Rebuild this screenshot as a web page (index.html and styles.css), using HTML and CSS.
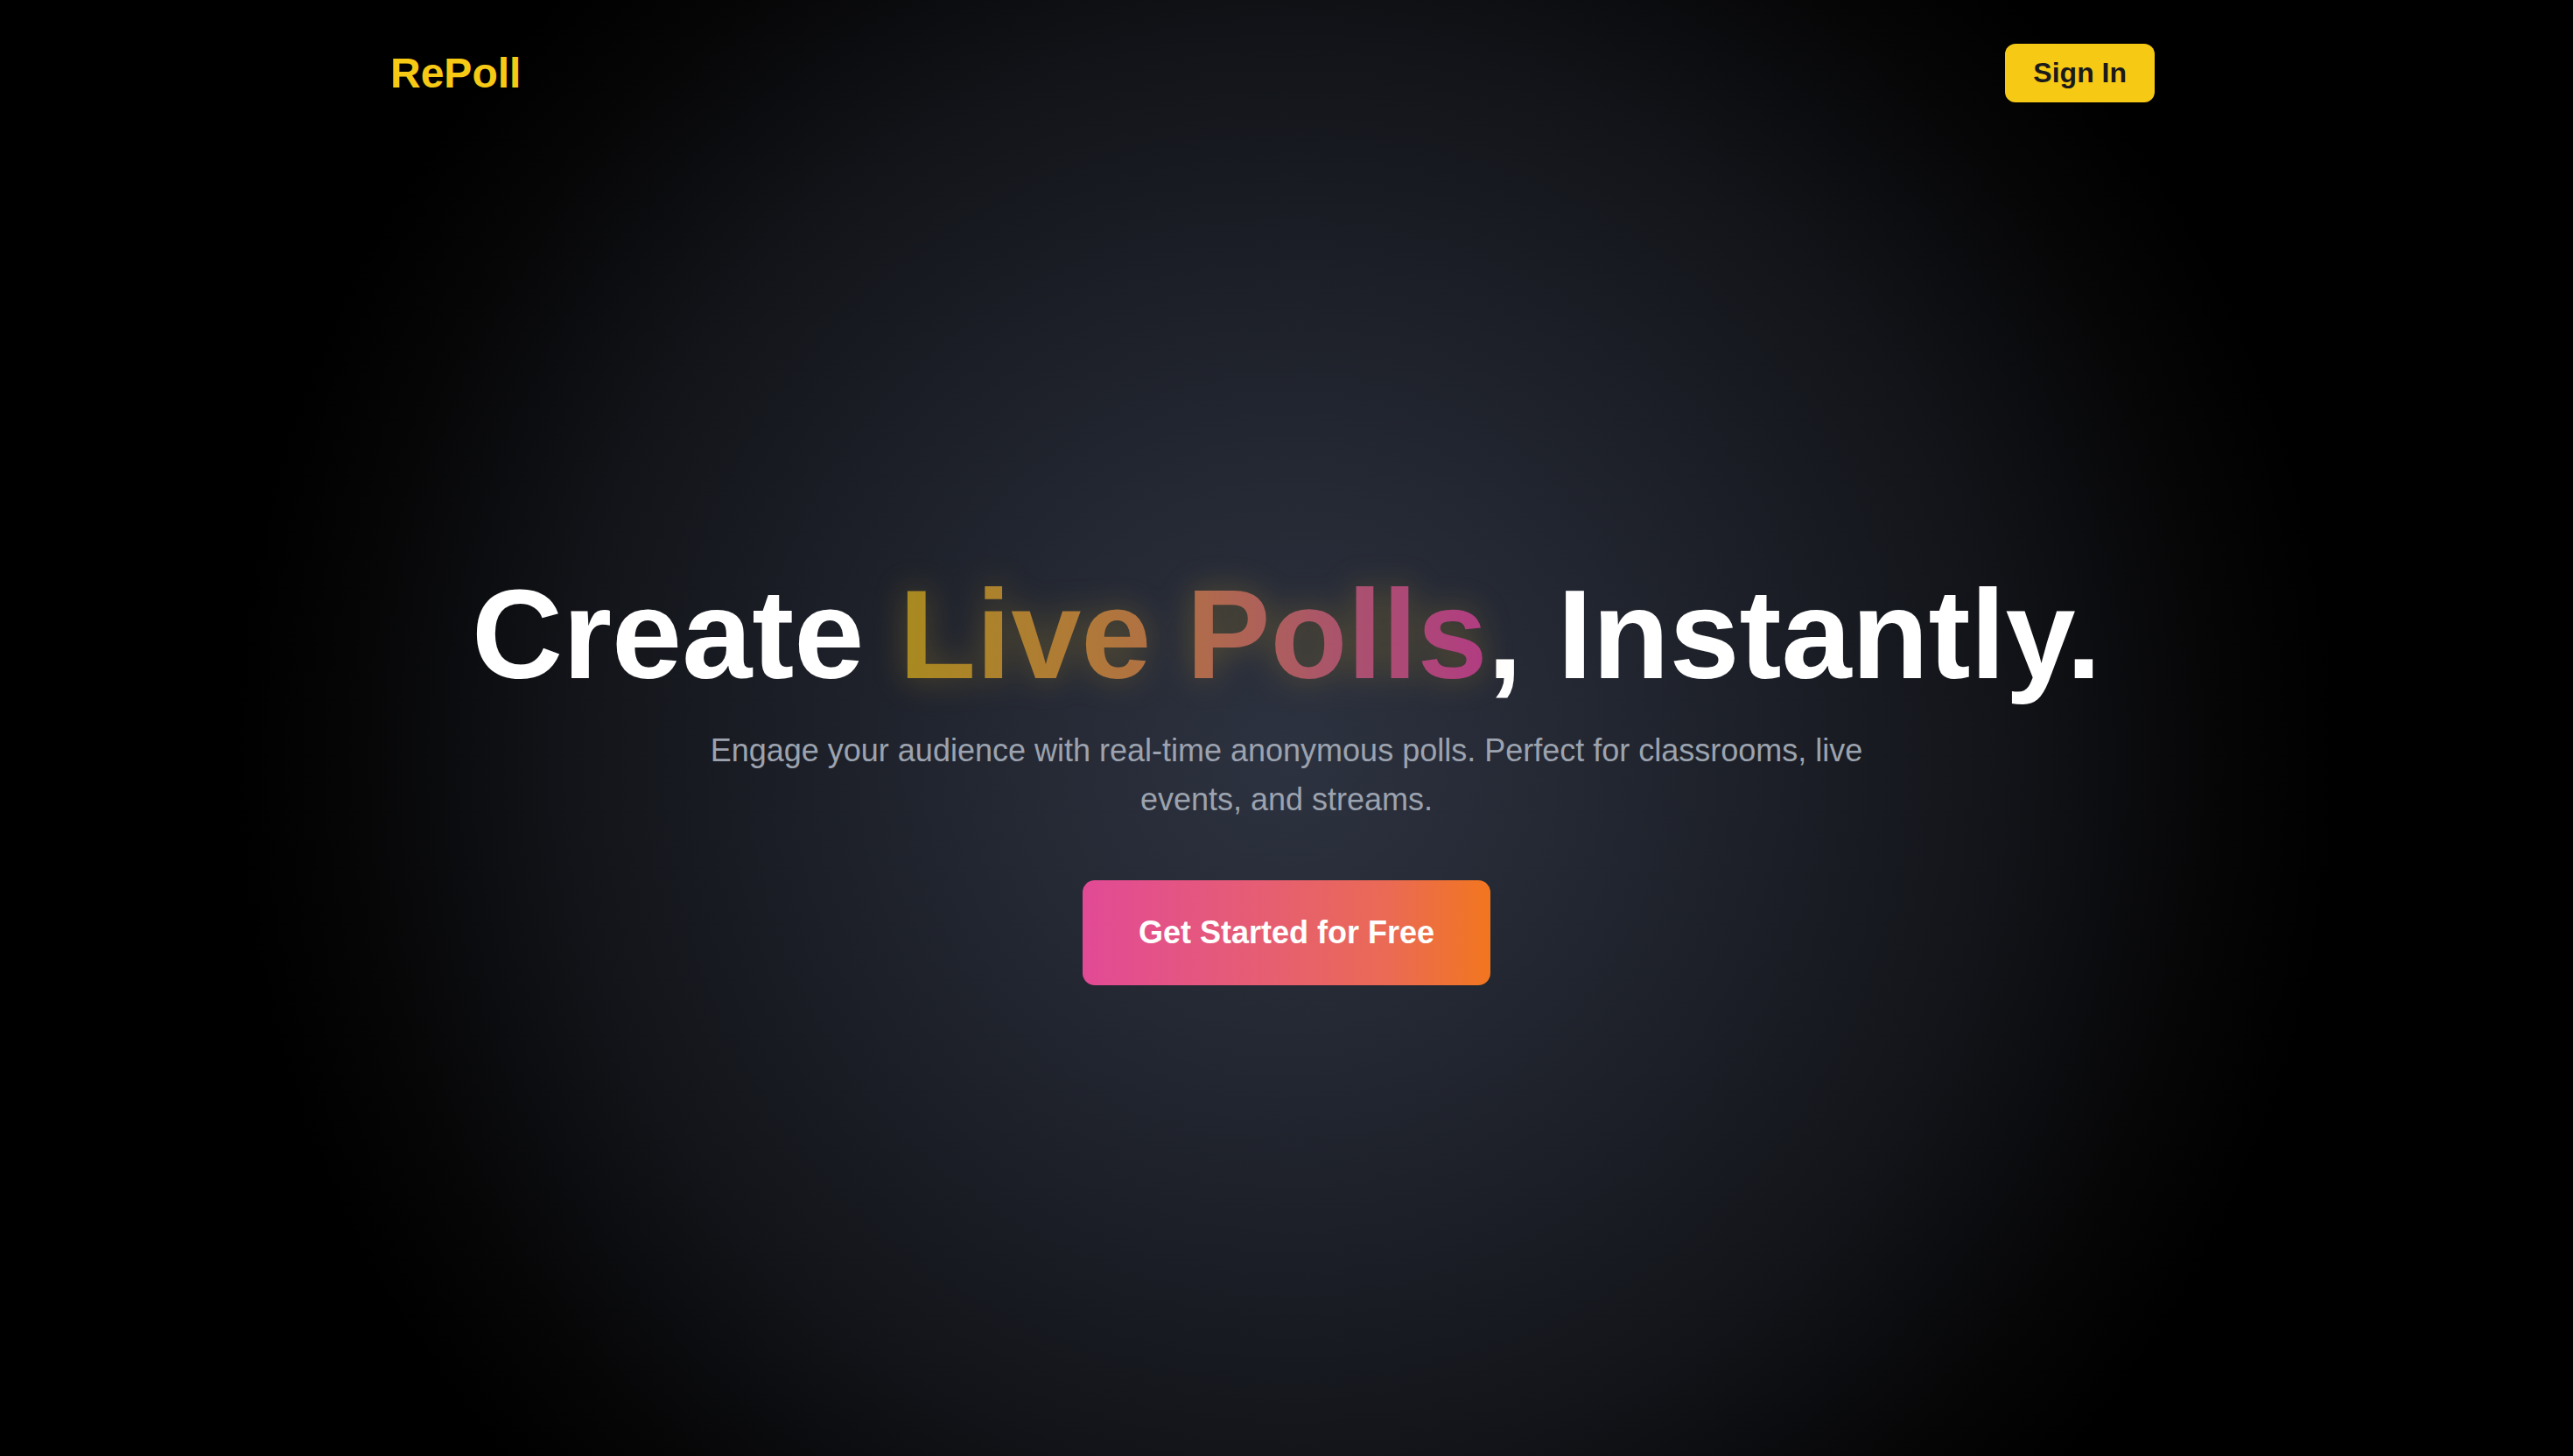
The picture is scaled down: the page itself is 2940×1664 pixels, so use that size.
FILE: index.html
```html
<!DOCTYPE html>
<html lang="en">
<head>
<meta charset="utf-8">
<title>RePoll</title>
<link rel="stylesheet" href="styles.css">
</head>
<body>
<div class="page">
  <header class="header">
    <div class="header-inner">
      <a class="logo" href="#">RePoll</a>
      <button class="signin">Sign In</button>
    </div>
  </header>
  <main class="hero">
    <h1 class="title">Create <span class="accent">Live Polls</span>, Instantly.</h1>
    <p class="subtitle">Engage your audience with real-time anonymous polls. Perfect for classrooms, live events, and streams.</p>
    <button class="cta">Get Started for Free</button>
  </main>
</div>
</body>
</html>
```

FILE: styles.css
```css
* { box-sizing: border-box; }
html, body {
  margin: 0;
  padding: 0;
  height: 100%;
}
body {
  font-family: "Liberation Sans", Arial, sans-serif;
  background: #000;
  color: #fff;
}
.page {
  min-height: 100vh;
  display: flex;
  flex-direction: column;
  background: radial-gradient(circle 1200px at 50% 52%, #2d3240 0%, #252934 25%, #1b1e26 48%, #121419 68%, #060607 88%, #000 100%);
}
.header {
  height: 116px;
  padding-top: 50px;
}
.header-inner {
  width: 2048px;
  margin: 0 auto;
  display: flex;
  align-items: center;
  justify-content: space-between;
}
.logo {
  font-size: 48px;
  line-height: 64px;
  font-weight: 700;
  color: #f6c915;
  text-decoration: none;
}
.signin {
  margin-right: 32px;
  font-family: inherit;
  font-size: 32px;
  line-height: 35px;
  font-weight: 700;
  color: #1a1a1a;
  background: #f6c915;
  border: none;
  border-radius: 12px;
  padding: 16px 32px;
  cursor: pointer;
}
.hero {
  flex: 1;
  display: flex;
  flex-direction: column;
  align-items: center;
  justify-content: center;
  text-align: center;
}
.title {
  margin: 0 0 32px;
  font-size: 144px;
  line-height: 144px;
  font-weight: 700;
  color: #fff;
}
.accent {
  display: inline-block;
  background: linear-gradient(to right, #a88a1f 0%, #b07a37 30%, #b06a4c 52%, #aa526e 76%, #b13c82 100%);
  -webkit-background-clip: text;
  background-clip: text;
  color: transparent;
  filter: drop-shadow(0 0 18px rgba(230, 180, 40, 0.28));
}
.subtitle {
  margin: 0 0 64px;
  max-width: 1344px;
  font-size: 36px;
  line-height: 56px;
  color: #9ca3af;
}
.cta {
  font-family: inherit;
  font-size: 36px;
  line-height: 56px;
  font-weight: 700;
  color: #fff;
  border: none;
  border-radius: 14px;
  padding: 32px 64px;
  background: linear-gradient(to right, #e24a96 0%, #e65e72 45%, #ea6a54 75%, #f2761f 100%);
  cursor: pointer;
}
```
